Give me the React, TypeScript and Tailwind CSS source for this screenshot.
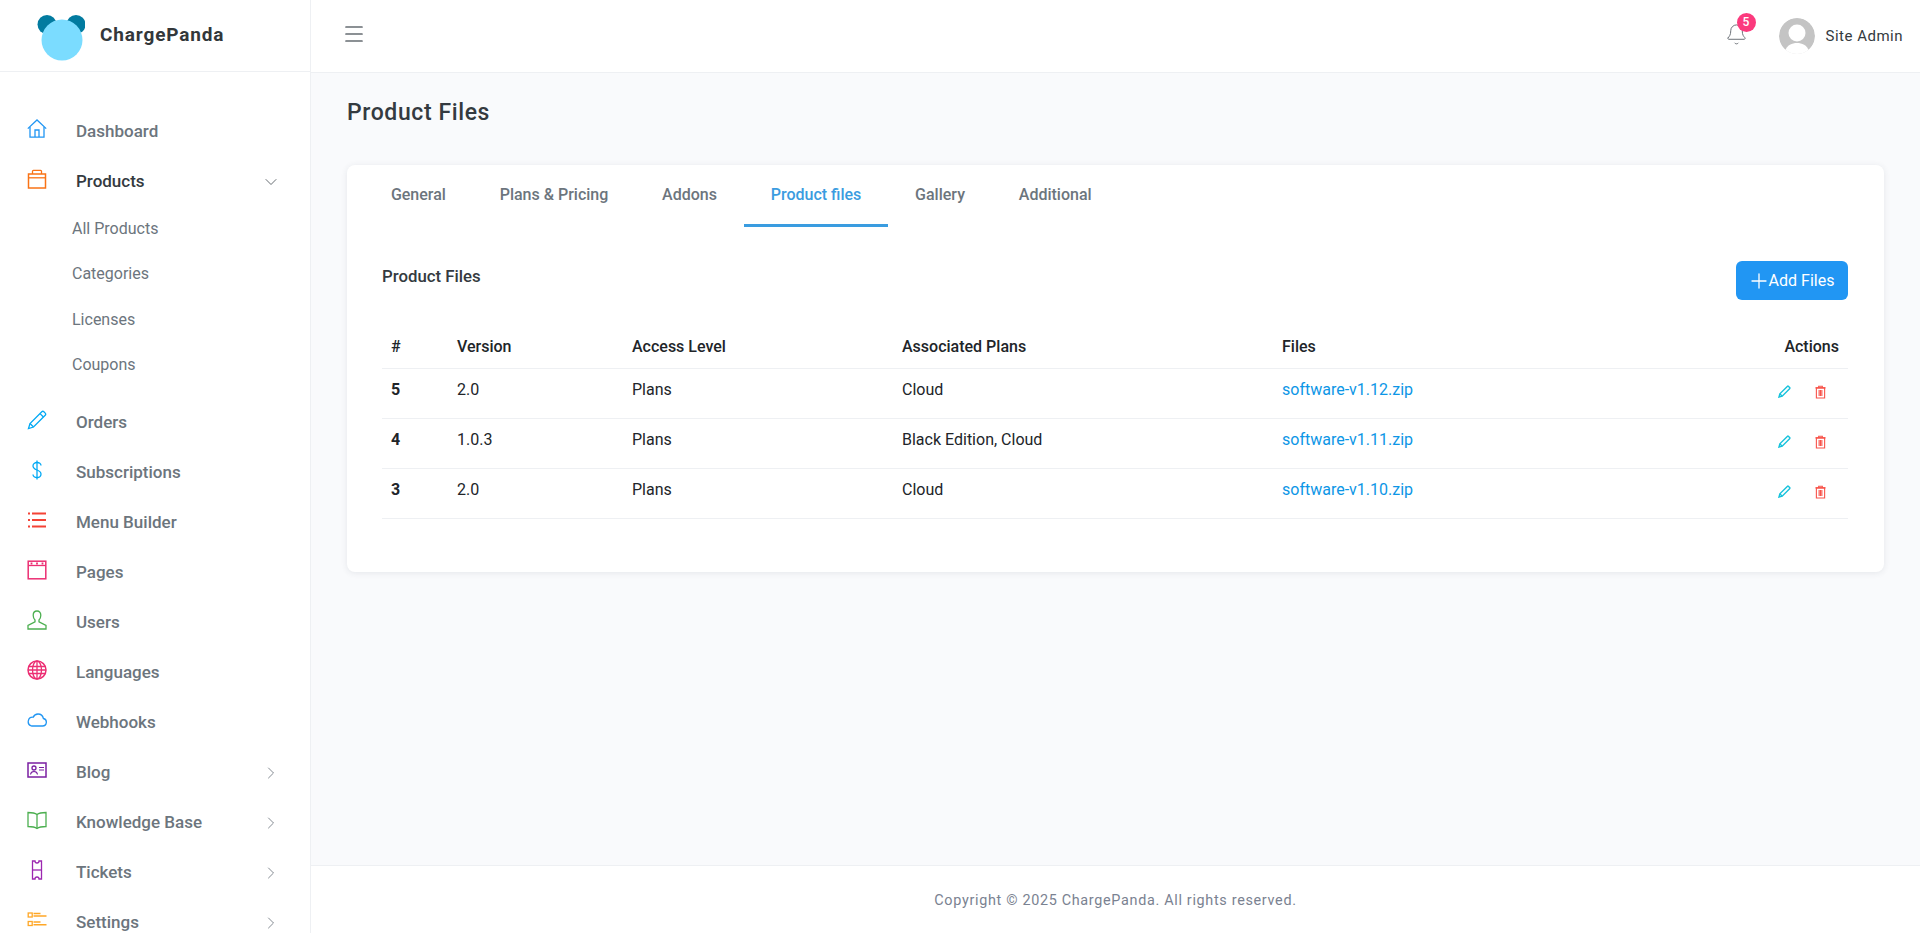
import { Bell, ChevronDown, ChevronRight, Menu, Plus } from "lucide-react";
import type { ReactNode } from "react";

const Ico = ({ className, children }: { className: string; children: ReactNode }) => (
  <svg
    viewBox="0 0 20 20"
    fill="none"
    stroke="currentColor"
    strokeWidth="1.3"
    className={`w-[20px] h-[20px] shrink-0 -mt-[6px] ${className}`}
  >
    {children}
  </svg>
);

const navItems = [
  {
    label: "Dashboard",
    icon: (
      <Ico className="text-[#2196f3]">
        <path d="M0.8 9.6 10 1l9.2 8.6" />
        <path d="M3 8v10.2h14V8" />
        <path d="M8 18v-7h4v7" />
      </Ico>
    ),
  },
  {
    label: "Products",
    active: true,
    open: true,
    icon: (
      <Ico className="text-[#f97316]">
        <rect x="1.5" y="5" width="17" height="14" strokeWidth="1.5" />
        <path d="M1.5 8.800h17" />
        <path d="M5.500 5V2.200c0-.5.4-.9.900-.9h7.200c.5 0 .9.4.9.9V5" />
      </Ico>
    ),
  },
  {
    label: "Orders",
    icon: (
      <Ico className="text-[#03a9f4]">
        <path d="M1.5 18.500 3 13.500 14.800 1.800a1.500 1.500 0 0 1 2.100 0l1.300 1.300a1.500 1.500 0 0 1 0 2.100L6.500 17z" />
        <path d="M3 13.500 6.500 17M13 3.600l3.400 3.400" />
      </Ico>
    ),
  },
  {
    label: "Subscriptions",
    icon: (
      <Ico className="text-[#03a9f4]">
        <path d="M14 5.500C14 3.500 12.200 2.500 10 2.500S6 3.800 6 6c0 4.800 8 3.200 8 8 0 2.200-1.800 3.500-4 3.500S6 16.500 6 14.500" />
        <path d="M10 .5v19" />
      </Ico>
    ),
  },
  {
    label: "Menu Builder",
    icon: (
      <Ico className="text-[#f44336]">
        <path d="M5 3.500h14M5 10h14M5 16.500h14" strokeWidth="2" />
        <path d="M1 3.500h2M1 10h2M1 16.500h2" strokeWidth="2" />
      </Ico>
    ),
  },
  {
    label: "Pages",
    icon: (
      <Ico className="text-[#ec2f73]">
        <rect x="1.200" y="1.200" width="17.600" height="17.600" strokeWidth="1.500" />
        <path d="M1.200 5.500h17.600" />
        <path d="M4.500 2.500v2M10 2.500v2M15.500 2.500v2" strokeWidth="1.800" />
      </Ico>
    ),
  },
  {
    label: "Users",
    icon: (
      <Ico className="text-[#4caf50]">
        <path d="M10 1c-2.400 0-3.800 1.800-3.800 4.200 0 2 .7 3.800 1.800 4.800v1.800L1 15.500v3.500h18v-3.500l-7-3.700V10c1.100-1 1.800-2.800 1.800-4.800C13.800 2.800 12.400 1 10 1z" />
      </Ico>
    ),
  },
  {
    label: "Languages",
    icon: (
      <Ico className="text-[#ec2f73]">
        <circle cx="10" cy="10" r="9" strokeWidth="1.500" />
        <ellipse cx="10" cy="10" rx="4.500" ry="9" />
        <path d="M10 1v18M1.800 6.500h16.400M1.800 13.500h16.400M1 10h18" />
      </Ico>
    ),
  },
  {
    label: "Webhooks",
    icon: (
      <Ico className="text-[#2196f3]">
        <path d="M4.500 16h11a3.800 3.800 0 0 0 .9-7.500C15.800 5.800 13.500 4 11 4 8.800 4 7 5.300 6.200 7.200A4.500 4.500 0 0 0 4.500 16z" />
      </Ico>
    ),
  },
  {
    label: "Blog",
    caret: true,
    icon: (
      <Ico className="text-[#7b1fa2]">
        <rect x="1" y="3" width="18" height="14" strokeWidth="1.500" />
        <circle cx="7" cy="8" r="2" />
        <path d="M3.500 14.500c.3-2.200 1.600-3 3.500-3s3.200.8 3.500 3M12 7.500h5M12 10h5" strokeWidth="1.100" />
      </Ico>
    ),
  },
  {
    label: "Knowledge Base",
    caret: true,
    icon: (
      <Ico className="text-[#4caf50]">
        <path d="M10 4.500C8 3 4 2.500 1 2.500v14c3 0 7 .5 9 2 2-1.500 6-2 9-2v-14c-3 0-7 .5-9 2z" />
        <path d="M10 4.500v14" />
      </Ico>
    ),
  },
  {
    label: "Tickets",
    caret: true,
    icon: (
      <Ico className="text-[#9c27b0]">
        <path d="M5.500 1h2.500a2 2 0 0 0 4 0h2.500v18H12a2 2 0 0 0-4 0H5.500z" />
        <path d="M5.500 10h9" />
      </Ico>
    ),
  },
  {
    label: "Settings",
    caret: true,
    icon: (
      <Ico className="text-[#ffa726]">
        <rect x="1.200" y="3" width="4" height="4" />
        <rect x="1.200" y="11.500" width="4" height="4" />
        <path d="M6.500 3.500h7M6.500 6h13M6.500 12h7M6.500 14.800h13" strokeWidth="1.500" />
      </Ico>
    ),
  },
];

const subItems = ["All Products", "Categories", "Licenses", "Coupons"];
const tabs = ["General", "Plans & Pricing", "Addons", "Product files", "Gallery", "Additional"];
const files = [
  { id: 5, version: "2.0", plans: "Cloud", file: "software-v1.12.zip" },
  { id: 4, version: "1.0.3", plans: "Black Edition, Cloud", file: "software-v1.11.zip" },
  { id: 3, version: "2.0", plans: "Cloud", file: "software-v1.10.zip" },
];

function Sidebar() {
  return (
    <aside className="w-[311px] shrink-0 h-full bg-white border-r border-[#eef0f3] overflow-hidden">
      <div className="h-[72px] border-b border-[#eef0f3] flex items-center pl-[37px] gap-[15px]">
        <svg viewBox="0 0 48 50" className="w-[48px] h-[50px] shrink-0 mt-[9px]">
          <circle cx="10" cy="9.5" r="9.5" fill="#027ba0" />
          <circle cx="39" cy="9.5" r="9.5" fill="#027ba0" />
          <circle cx="25" cy="25" r="20.5" fill="#7bdcff" />
        </svg>
        <span className="text-[19px] font-bold tracking-[0.85px] text-[#33373a]">ChargePanda</span>
      </div>
      <nav className="pt-[35px]">
        {navItems.map((item) => (
          <div key={item.label}>
            <div className="h-[50px] flex items-center pl-[27px] pr-[29px]">
              {item.icon}
              <span className={`ml-[29px] flex-1 text-[17px] font-medium ${item.active ? "text-[#343a40]" : "text-[#6c757d]"}`}>
                {item.label}
              </span>
              {item.caret && <ChevronRight className="w-[20px] h-[20px] text-[#6c757d]" strokeWidth={1} />}
              {item.open && <ChevronDown className="w-[20px] h-[20px] text-[#495057]" strokeWidth={1} />}
            </div>
            {item.open && (
              <div className="-mt-[1px] pb-[10px]">
                {subItems.map((s) => (
                  <div key={s} className="h-[45.5px] flex items-center pl-[72px] text-[16px] text-[#6c757d]">
                    {s}
                  </div>
                ))}
              </div>
            )}
          </div>
        ))}
      </nav>
    </aside>
  );
}

function Topbar() {
  return (
    <header className="h-[73px] shrink-0 bg-white border-b border-[#eef0f3] flex items-center pl-[31px] pr-[17px]">
      <Menu className="w-[24px] h-[24px] text-[#666c72] -mt-[4px]" strokeWidth={1.7} />
      <div className="flex-1" />
      <div className="relative mr-[31px] -mt-[4px]">
        <Bell className="w-[23px] h-[23px] text-[#666c72]" strokeWidth={1} />
        <span className="absolute -top-[10px] left-[12px] w-[19px] h-[19px] rounded-full bg-[#fb3a7d] text-white text-[12px] font-medium flex items-center justify-center">
          5
        </span>
      </div>
      <svg viewBox="0 0 36 36" className="w-[36px] h-[36px] rounded-full mr-[11px] shrink-0">
        <circle cx="18" cy="18" r="18" fill="#c4c4c4" />
        <circle cx="18" cy="15" r="8.5" fill="#fff" />
        <path d="M6 33c2-6 7-8 12-8s10 2 12 8c-3 3-7 3-12 3s-9 0-12-3z" fill="#fff" />
      </svg>
      <span className="text-[15px] tracking-[0.5px] text-[#343a40]">Site Admin</span>
    </header>
  );
}

function FilesTable() {
  return (
    <table className="w-full mt-[24px] border-collapse table-fixed text-[16px] text-[#212529]">
      <colgroup>
        <col className="w-[66px]" />
        <col className="w-[175px]" />
        <col className="w-[270px]" />
        <col className="w-[380px]" />
        <col />
        <col className="w-[120px]" />
      </colgroup>
      <thead>
        <tr className="h-[44px] border-b border-[#eef0f3]">
          <th className="text-left font-medium pl-[9px] pt-[3px]">#</th>
          <th className="text-left font-medium pl-[9px] pt-[3px]">Version</th>
          <th className="text-left font-medium pl-[9px] pt-[3px]">Access Level</th>
          <th className="text-left font-medium pl-[9px] pt-[3px]">Associated Plans</th>
          <th className="text-left font-medium pl-[9px] pt-[3px]">Files</th>
          <th className="text-right font-medium pr-[9px] pt-[3px]">Actions</th>
        </tr>
      </thead>
      <tbody>
        {files.map((f) => (
          <tr key={f.id} className="h-[50px] border-b border-[#eef0f3]">
            <td className="pl-[9px] align-top pt-[9px] font-bold">{f.id}</td>
            <td className="pl-[9px] align-top pt-[9px]">{f.version}</td>
            <td className="pl-[9px] align-top pt-[9px]">Plans</td>
            <td className="pl-[9px] align-top pt-[9px]">{f.plans}</td>
            <td className="pl-[9px] align-top pt-[9px] text-[#0d96e6]">{f.file}</td>
            <td className="align-top pt-[16px]">
              <div className="flex justify-end items-center gap-[24px] pr-[22px]">
                <svg viewBox="0 0 14 14" fill="none" stroke="#16c2dc" strokeWidth="1.5" className="w-[13px] h-[13px]">
                  <path d="M1 13l1-3.5L10 1.5a1 1 0 0 1 1.400 0l1.100 1.100a1 1 0 0 1 0 1.400L4.500 12z" />
                  <path d="M2 9.500 4.500 12" />
                </svg>
                <svg viewBox="0 0 12 14" fill="none" stroke="#f8534a" strokeWidth="1.2" className="w-[11px] h-[14px]">
                  <path d="M1.5 2.500h9V13.500h-9z" />
                  <path d="M0.5 2.500h11M4 2.500V.8h4v1.700M4.500 4.800v6.500M7.500 4.800v6.500M6 4.800v6.500" />
                </svg>
              </div>
            </td>
          </tr>
        ))}
      </tbody>
    </table>
  );
}

export default function App() {
  return (
    <div className="h-[933px] w-full flex overflow-hidden bg-white font-['Roboto',sans-serif]">
      <Sidebar />
      <div className="flex-1 min-w-0 flex flex-col">
        <Topbar />
        <main className="flex-1 bg-[#f9fafc] px-[36px] pt-[26px]">
          <h1 className="text-[23px] font-medium tracking-[0.6px] text-[#343a40] leading-[28px] h-[66px]">Product Files</h1>
          <div className="bg-white rounded-lg shadow-[0_1px_6px_rgba(50,60,80,0.1)]">
            <div className="flex px-[17px] h-[62px]">
              {tabs.map((t) => (
                <div
                  key={t}
                  className={`px-[26.9px] pt-[18px] text-[16px] font-medium ${
                    t === "Product files"
                      ? "text-[#3a9ce0] border-b-[3px] border-[#3a9ce0]"
                      : "text-[#6c757d]"
                  }`}
                >
                  {t}
                </div>
              ))}
            </div>
            <div className="pl-[35px] pr-[36px] pt-[34px] pb-[53px]">
              <div className="flex items-start justify-between">
                <h2 className="mt-[3px] text-[16.8px] font-medium text-[#343a40]">Product Files</h2>
                <button className="h-[39px] w-[112px] rounded-md bg-[#2196f3] text-white text-[16px] flex items-center justify-center">
                  <Plus className="w-[24px] h-[24px] -ml-[3px] -mr-[2px]" strokeWidth={1.3} />
                  Add Files
                </button>
              </div>
              <FilesTable />
            </div>
          </div>
        </main>
        <footer className="h-[68px] shrink-0 bg-white border-t border-[#eef0f3] pt-[2px] flex items-center justify-center text-[14.4px] tracking-[0.68px] text-[#7a8291]">
          Copyright © 2025 ChargePanda. All rights reserved.
        </footer>
      </div>
    </div>
  );
}
